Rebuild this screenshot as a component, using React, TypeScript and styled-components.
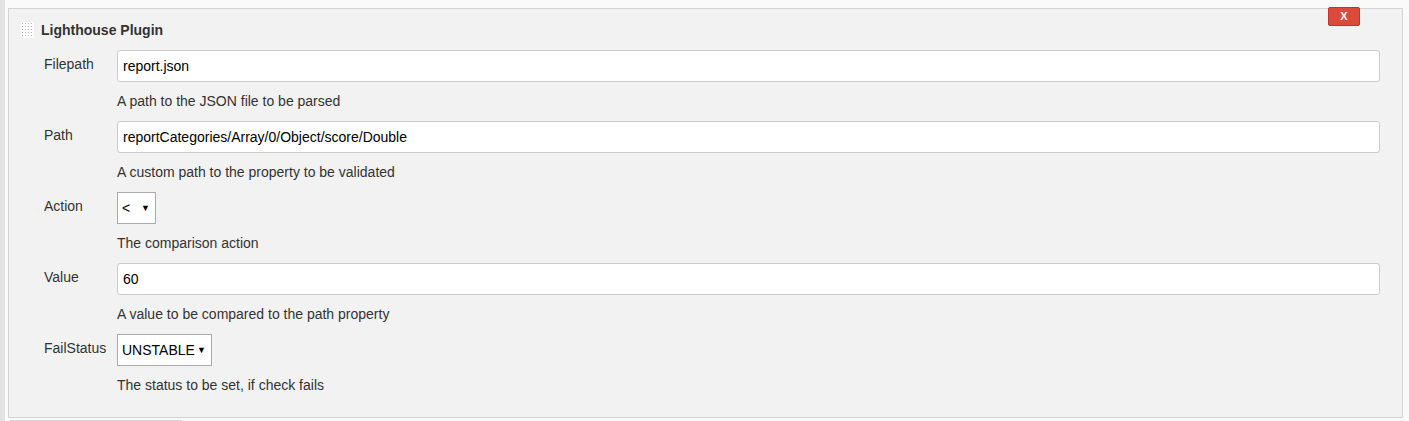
import React from "react";
import styled, { createGlobalStyle } from "styled-components";

const GlobalStyle = createGlobalStyle`
  html, body {
    margin: 0;
    padding: 0;
    background: #fafafa;
    font-family: "Liberation Sans", Arial, sans-serif;
    font-size: 14px;
    color: #333;
  }
`;

const Page = styled.div`
  display: flex;
  min-height: 421px;
  overflow: hidden;
`;

const SideStrip = styled.div`
  width: 5px;
  background: #e3e3e3;
  flex-shrink: 0;
`;

const Main = styled.div`
  flex: 1;
  padding: 8px 6px 0 3px;
`;

const Section = styled.div`
  position: relative;
  background: #f2f2f2;
  border: 1px solid #d3d3d3;
  padding: 12px 22px 12px 12px;
`;

const RemoveButton = styled.button`
  position: absolute;
  top: -2px;
  right: 42px;
  width: 32px;
  height: 19px;
  border: 1px solid #c9302c;
  border-radius: 2px;
  background: #dc4a3b;
  color: #fff;
  font-family: "Liberation Sans", Arial, sans-serif;
  font-weight: bold;
  font-size: 11px;
  line-height: 17px;
  padding: 0;
  cursor: pointer;
`;

const Header = styled.div`
  display: flex;
  align-items: center;
  gap: 7px;
  height: 18px;
  margin-bottom: 11px;
`;

const Handle = styled.span`
  display: inline-block;
  width: 13px;
  height: 16px;
  background-color: #fff;
  background-image: radial-gradient(#b8b8b8 0.8px, transparent 1px);
  background-size: 3px 3px;
  background-position: 0 0;
`;

const Title = styled.span`
  font-weight: bold;
  font-size: 14px;
  color: #333;
`;

const Rows = styled.div`
  display: grid;
  grid-template-columns: 73px 1fr;
  padding-left: 23px;
`;

const Label = styled.div`
  padding-top: 5px;
  line-height: 18px;
  color: #333;
`;

const Field = styled.div`
  display: flex;
  flex-direction: column;
  align-items: flex-start;
  margin-bottom: 11px;
`;

const TextInput = styled.input`
  box-sizing: border-box;
  width: 100%;
  height: 32px;
  padding: 0 5px;
  border: 1px solid #cccccc;
  border-radius: 3px;
  background: #fff;
  font-family: "Liberation Sans", Arial, sans-serif;
  font-size: 14px;
  color: #000;
  outline: none;
`;

const SelectWrap = styled.div`
  position: relative;
  display: inline-block;
`;

const Select = styled.select<{ $width: number }>`
  appearance: none;
  box-sizing: border-box;
  width: ${(p) => p.$width}px;
  height: 32px;
  padding: 0 0 0 4px;
  border: 1px solid #aaaaaa;
  border-radius: 0;
  background: #fff;
  font-family: "Liberation Sans", Arial, sans-serif;
  font-size: 14px;
  color: #000;
  outline: none;
`;

const Arrow = styled.span`
  position: absolute;
  right: 6px;
  top: 50%;
  transform: translateY(-50%);
  font-size: 9px;
  color: #000;
  pointer-events: none;
`;

const Description = styled.div`
  margin-top: 10px;
  line-height: 18px;
  color: #333;
`;

const NextBar = styled.div`
  width: 172px;
  height: 2px;
  margin: 2px 0 0 2px;
  background: #d6d6d6;
`;

interface FieldRowProps {
  label: string;
  help: string;
  children: React.ReactNode;
}

const FieldRow = ({ label, help, children }: FieldRowProps) => (
  <>
    <Label>{label}</Label>
    <Field>
      {children}
      <Description>{help}</Description>
    </Field>
  </>
);

interface DropdownProps {
  width: number;
  value: string;
  options: string[];
}

const Dropdown = ({ width, value, options }: DropdownProps) => (
  <SelectWrap>
    <Select $width={width} defaultValue={value}>
      {options.map((o) => (
        <option key={o} value={o}>
          {o}
        </option>
      ))}
    </Select>
    <Arrow>▼</Arrow>
  </SelectWrap>
);

export default function App() {
  return (
    <>
      <GlobalStyle />
      <Page>
        <SideStrip />
        <Main>
          <Section>
            <RemoveButton>X</RemoveButton>
            <Header>
              <Handle />
              <Title>Lighthouse Plugin</Title>
            </Header>
            <Rows>
              <FieldRow label="Filepath" help="A path to the JSON file to be parsed">
                <TextInput defaultValue="report.json" />
              </FieldRow>
              <FieldRow label="Path" help="A custom path to the property to be validated">
                <TextInput defaultValue="reportCategories/Array/0/Object/score/Double" />
              </FieldRow>
              <FieldRow label="Action" help="The comparison action">
                <Dropdown width={39} value="<" options={["<", ">", "=", "<=", ">="]} />
              </FieldRow>
              <FieldRow label="Value" help="A value to be compared to the path property">
                <TextInput defaultValue="60" />
              </FieldRow>
              <FieldRow label="FailStatus" help="The status to be set, if check fails">
                <Dropdown width={95} value="UNSTABLE" options={["UNSTABLE", "FAILURE"]} />
              </FieldRow>
            </Rows>
          </Section>
          <NextBar />
        </Main>
      </Page>
    </>
  );
}
